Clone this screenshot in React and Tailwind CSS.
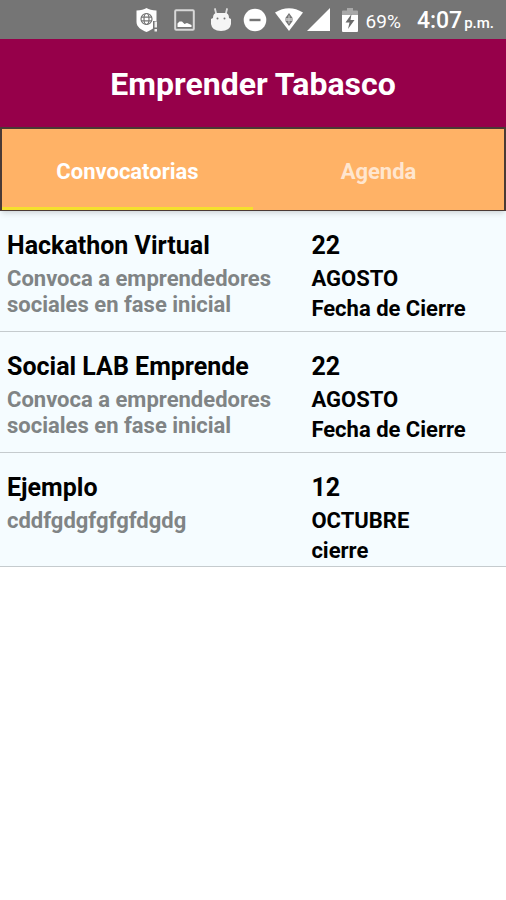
import { useState } from 'react';

const convocatorias = [
  { id: 1, titulo: 'Hackathon Virtual', descripcion: 'Convoca a emprendedores sociales en fase inicial', dia: '22', mes: 'AGOSTO', nota: 'Fecha de Cierre' },
  { id: 2, titulo: 'Social LAB Emprende', descripcion: 'Convoca a emprendedores sociales en fase inicial', dia: '22', mes: 'AGOSTO', nota: 'Fecha de Cierre' },
  { id: 3, titulo: 'Ejemplo', descripcion: 'cddfgdgfgfgfdgdg', dia: '12', mes: 'OCTUBRE', nota: 'cierre' },
];

function ShieldIcon() {
  return (
    <svg width="22" height="26" viewBox="0 0 22 26" aria-hidden="true">
      <path d="M0.5 3.5C5 3.5 8 2.5 10.5 1C13 2.5 16 3.5 20.5 3.5V15C20.5 20 15.5 23 10.5 25C5.5 23 0.5 20 0.5 15Z" fill="#fff" />
      <g fill="none" stroke="#777" strokeWidth="1.2">
        <circle cx="10.5" cy="12" r="5.5" />
        <ellipse cx="10.5" cy="12" rx="2.5" ry="5.5" />
        <path d="M5 10.2h11M5 13.8h11" />
      </g>
      <path d="M17 14h5v12h-5z" fill="#757575" />
      <path d="M18.5 14.5h2.5v6h-2.5zM18.5 22h2.5v2.5h-2.5z" fill="#eee" />
    </svg>
  );
}

function PictureIcon() {
  return (
    <svg width="21" height="22" viewBox="0 0 21 22" aria-hidden="true">
      <rect x="1.2" y="1.2" width="18.6" height="19.6" rx="1" fill="none" stroke="#d8d8d8" strokeWidth="2" />
      <path d="M3.5 18V14.5L5.5 12.5h2.5l2.5 2.5 2.5-1L17.5 16v2z" fill="#fff" />
    </svg>
  );
}

function AndroidIcon() {
  return (
    <svg width="20" height="24" viewBox="0 0 20 24" aria-hidden="true">
      <path d="M4 1l1.5 6M16 1l-1.5 6" stroke="#ddd" strokeWidth="1.8" strokeLinecap="round" />
      <path d="M2 10Q2 5 6 5H14Q18 5 18 10L20 11V16Q19 23 10 23Q1 23 0 16V11Z" fill="#f5f5f5" />
      <circle cx="6.5" cy="10.5" r="1" fill="#757575" />
      <circle cx="13.5" cy="10.5" r="1" fill="#757575" />
    </svg>
  );
}

function DoNotDisturbIcon() {
  return (
    <svg width="24" height="24" viewBox="0 0 24 24" aria-hidden="true">
      <circle cx="12" cy="12" r="11.3" fill="#fff" />
      <path d="M6.5 12h11" stroke="#757575" strokeWidth="2.4" />
    </svg>
  );
}

function WifiIcon() {
  return (
    <svg width="28" height="23" viewBox="0 0 28 23" aria-hidden="true">
      <path d="M0 4.5Q14 -4 28 4.5L14 23Z" fill="#fff" />
      <path d="M14 5l4 5.5h-8zM10 12.5h8l-4 5.5z" fill="#757575" />
      <path d="M10 10.5h8v2h-8z" fill="#b5b5b5" />
      <path d="M14 7.5v8" stroke="#ccc" strokeWidth="1" />
    </svg>
  );
}

function SignalIcon() {
  return (
    <svg width="23" height="23" viewBox="0 0 23 23" aria-hidden="true">
      <path d="M23 0V23H0Z" fill="#fff" />
    </svg>
  );
}

function BatteryIcon() {
  return (
    <svg width="16" height="24" viewBox="0 0 16 24" aria-hidden="true">
      <path d="M5 0h6v2.5h4q1 0 1 1V8H0V3.5q0-1 1-1h4z" fill="#a8a8a8" />
      <path d="M0 7h16v16q0 1-1 1H1q-1 0-1-1z" fill="#fff" />
      <path d="M9.5 6L3.5 14.5h4L6 21l6.5-9H8.5z" fill="#6b6b6b" />
    </svg>
  );
}

function StatusBar() {
  return (
    <div className="flex h-[39px] items-center justify-end bg-[#757575] pr-3 text-white">
      <div className="mr-2 flex items-center">
        <div className="flex items-center gap-4">
          <ShieldIcon />
          <PictureIcon />
          <AndroidIcon />
        </div>
        <div className="ml-3 flex items-center gap-2">
          <DoNotDisturbIcon />
          <div className="flex items-center gap-1">
            <WifiIcon />
            <SignalIcon />
          </div>
        </div>
        <div className="ml-3 flex">
          <BatteryIcon />
        </div>
      </div>
      <div className="flex items-baseline gap-4 pt-[3px]">
        <span className="text-[19px]">69%</span>
        <div className="flex items-baseline gap-0.5 font-medium">
          <span className="text-[23px]">4:07</span>
          <span className="text-[15px]">p.m.</span>
        </div>
      </div>
    </div>
  );
}

function Tab({ label, active, onClick }) {
  return (
    <button
      type="button"
      role="tab"
      aria-selected={active}
      onClick={onClick}
      className={`flex-1 border-b-[3px] pt-[6px] text-[22px] font-bold ${
        active ? 'border-[#f5e02c] text-white' : 'border-transparent text-white/70'
      }`}
    >
      {label}
    </button>
  );
}

function Convocatoria({ item }) {
  return (
    <li className="flex border-b border-[#c5cbce] pl-[7px] pt-[19px] font-bold">
      <div className="w-[61%] pb-[13px] pr-3">
        <h2 className="text-[25px] leading-8 text-black">{item.titulo}</h2>
        <p className="mt-1 text-[22px] leading-[26px] text-[#808485]">{item.descripcion}</p>
      </div>
      <div className="flex-1 text-[22px] leading-[30px] text-black">
        <p className="mb-0.5 text-[25px] leading-8">{item.dia}</p>
        <p>{item.mes}</p>
        <p>{item.nota}</p>
      </div>
    </li>
  );
}

export default function App() {
  const [tab, setTab] = useState('convocatorias');

  return (
    <div className="min-h-screen bg-white font-[Roboto,sans-serif]">
      <StatusBar />
      <header className="flex h-[88px] items-center justify-center bg-[#96004a]">
        <h1 className="pt-[2px] text-[32px] font-bold text-white">Emprender Tabasco</h1>
      </header>
      <div role="tablist" className="relative flex h-[84px] border-2 border-b border-[#4a3a35] bg-[#ffb266] shadow-md">
        <Tab label="Convocatorias" active={tab === 'convocatorias'} onClick={() => setTab('convocatorias')} />
        <Tab label="Agenda" active={tab === 'agenda'} onClick={() => setTab('agenda')} />
      </div>
      {tab === 'convocatorias' && (
        <ul className="bg-[#f5fcff]">
          {convocatorias.map((item) => (
            <Convocatoria key={item.id} item={item} />
          ))}
        </ul>
      )}
    </div>
  );
}
